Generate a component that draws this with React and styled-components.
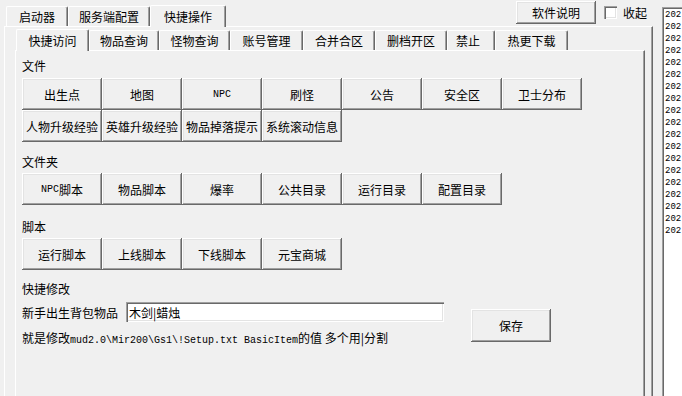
import React from 'react'
import styled, { createGlobalStyle } from 'styled-components'

const GlobalStyle = createGlobalStyle`
  html, body {
    margin: 0;
    padding: 0;
    background: #f0f0f0;
    overflow: hidden;
  }
  body {
    font-family: "Noto Sans CJK SC", "DejaVu Sans", sans-serif;
    font-size: 12px;
    color: #000;
  }
`

/* ---------------- layout ---------------- */
const Page = styled.div`
  display: flex;
  width: 682px;
  height: 396px;
  overflow: hidden;
`
const Main = styled.div`
  width: 649px;
  flex-shrink: 0;
  padding-left: 4px;
  display: flex;
  flex-direction: column;
`
const OuterHeader = styled.div`
  height: 26px;
  display: flex;
  align-items: flex-end;
  padding-left: 2px;
`
const HeaderTools = styled.div`
  margin-left: auto;
  align-self: flex-start;
  display: flex;
  align-items: center;
  padding-top: 1px;
  padding-right: 6px;
`
const OuterPanel = styled.div`
  flex: 1;
  display: flex;
  flex-direction: column;
  border-top: 1px solid #fff;
  border-left: 1px solid #fff;
  border-right: 1px solid #696969;
  box-shadow: inset -1px 0 0 #a0a0a0;
  padding: 0 7px 0 10px;
`
const InnerHeader = styled.div`
  height: 23px;
  display: flex;
  align-items: flex-end;
  padding-left: 1px;
`
const InnerPanel = styled.div`
  flex: 1;
  border-top: 1px solid #fff;
  border-left: 1px solid #fff;
  border-right: 1px solid #696969;
  box-shadow: inset -1px 0 0 #a0a0a0;
  padding: 7px 0 0 6px;
`

/* ---------------- tabs ---------------- */
const Tab = styled.div`
  box-sizing: border-box;
  width: ${p => p.$w}px;
  height: ${p => (p.$active ? 22 : 20)}px;
  display: flex;
  align-items: center;
  justify-content: ${p => (p.$left ? 'flex-start' : 'center')};
  padding-left: ${p => (p.$left ? 8 : 0)}px;
  padding-bottom: 1px;
  background: #f0f0f0;
  border-top: 1px solid #fff;
  border-left: 1px solid #fff;
  border-right: 1px solid #696969;
  box-shadow: inset -1px 0 0 #a0a0a0;
  border-radius: 2px 2px 0 0;
  margin-bottom: ${p => (p.$active ? -1 : 0)}px;
  position: relative;
  z-index: ${p => (p.$active ? 1 : 0)};
  white-space: nowrap;
`

/* ---------------- controls ---------------- */
const Button = styled.div`
  box-sizing: border-box;
  width: ${p => p.$w || 80}px;
  height: ${p => p.$h || 32}px;
  display: flex;
  align-items: center;
  justify-content: center;
  background: #f0f0f0;
  box-shadow: inset -1px -1px 0 #696969, inset 1px 1px 0 #fff,
    inset -2px -2px 0 #a0a0a0, inset 2px 2px 0 #e3e3e3;
  white-space: nowrap;
`
const Mono = styled.span`
  font-family: "Liberation Mono", "DejaVu Sans Mono", monospace;
  font-size: 10px;
`
const CheckBox = styled.div`
  box-sizing: border-box;
  width: 13px;
  height: 13px;
  margin: 0 6px 0 8px;
  background: #fff;
  box-shadow: inset 1px 1px 0 #a0a0a0, inset 2px 2px 0 #696969,
    inset -1px -1px 0 #fff, inset -2px -2px 0 #e3e3e3;
`
const Section = styled.div`
  margin-bottom: ${p => p.$mb || 12}px;
`
const Label = styled.div`
  line-height: 16px;
  margin-bottom: ${p => p.$mb || 3}px;
`
const ButtonGrid = styled.div`
  display: grid;
  grid-template-columns: repeat(7, 80px);
`
const EditArea = styled.div`
  display: flex;
  align-items: flex-start;
  margin-top: 5px;
`
const EditColumn = styled.div`
  display: flex;
  flex-direction: column;
`
const InputRow = styled.div`
  display: flex;
  align-items: center;
  gap: 8px;
`
const Input = styled.div`
  box-sizing: border-box;
  width: 318px;
  height: 20px;
  display: flex;
  align-items: center;
  padding-left: 3px;
  background: #fff;
  box-shadow: inset 1px 1px 0 #a0a0a0, inset 2px 2px 0 #696969,
    inset -1px -1px 0 #fff, inset -2px -2px 0 #e3e3e3;
`
const Hint = styled.div`
  margin-top: 8px;
  line-height: 16px;
  white-space: nowrap;
`
const SaveWrap = styled.div`
  margin: 7px 0 0 27px;
`

/* ---------------- log list ---------------- */
const Splitter = styled.div`
  width: 9px;
  flex-shrink: 0;
`
const ListBox = styled.div`
  box-sizing: border-box;
  width: 20px;
  flex-shrink: 0;
  margin-top: 7px;
  height: 400px;
  background: #fff;
  border-top: 1px solid #a0a0a0;
  border-left: 1px solid #a0a0a0;
  box-shadow: inset 1px 1px 0 #696969;
  padding: 1px 0 0 2px;
  overflow: hidden;
`
const LogLine = styled.div`
  font-family: "Liberation Mono", "DejaVu Sans Mono", monospace;
  font-size: 9px;
  line-height: 12px;
  white-space: nowrap;
`

const fileButtons = [
  '出生点', '地图', <Mono>NPC</Mono>, '刷怪', '公告', '安全区', '卫士分布',
  '人物升级经验', '英雄升级经验', '物品掉落提示', '系统滚动信息',
]
const folderButtons = [
  <><Mono>NPC</Mono>脚本</>, '物品脚本', '爆率', '公共目录', '运行目录', '配置目录',
]
const scriptButtons = ['运行脚本', '上线脚本', '下线脚本', '元宝商城']

const innerTabs = [
  { t: '快捷访问', w: 73, active: true },
  { t: '物品查询', w: 70 },
  { t: '怪物查询', w: 71 },
  { t: '账号管理', w: 73 },
  { t: '合并合区', w: 72 },
  { t: '删档开区', w: 72 },
  { t: '禁止', w: 48, left: true },
  { t: '热更下载', w: 73 },
]

const logs = Array.from({ length: 19 }, () => '202')

const App = () => {
  return (
    <Page>
      <GlobalStyle />
      <Main>
        <OuterHeader>
          <Tab $w={62}>启动器</Tab>
          <Tab $w={82}>服务端配置</Tab>
          <Tab $w={76} $active>快捷操作</Tab>
          <HeaderTools>
            <Button $w={80} $h={23}>软件说明</Button>
            <CheckBox />
            <span>收起</span>
          </HeaderTools>
        </OuterHeader>
        <OuterPanel>
          <InnerHeader>
            {innerTabs.map((x, i) => (
              <Tab key={i} $w={x.w} $active={x.active} $left={x.left}>{x.t}</Tab>
            ))}
          </InnerHeader>
          <InnerPanel>
            <Section>
              <Label $mb={4}>文件</Label>
              <ButtonGrid>
                {fileButtons.map((b, i) => <Button key={i}>{b}</Button>)}
              </ButtonGrid>
            </Section>
            <Section $mb={14}>
              <Label>文件夹</Label>
              <ButtonGrid>
                {folderButtons.map((b, i) => <Button key={i}>{b}</Button>)}
              </ButtonGrid>
            </Section>
            <Section $mb={11}>
              <Label>脚本</Label>
              <ButtonGrid>
                {scriptButtons.map((b, i) => <Button key={i}>{b}</Button>)}
              </ButtonGrid>
            </Section>
            <Label $mb={0}>快捷修改</Label>
            <EditArea>
              <EditColumn>
                <InputRow>
                  <span>新手出生背包物品</span>
                  <Input>木剑|蜡烛</Input>
                </InputRow>
                <Hint>
                  就是修改<Mono>mud2.0\Mir200\Gs1\!Setup.txt BasicItem</Mono>的值 多个用|分割
                </Hint>
              </EditColumn>
              <SaveWrap>
                <Button $w={80} $h={33}>保存</Button>
              </SaveWrap>
            </EditArea>
          </InnerPanel>
        </OuterPanel>
      </Main>
      <Splitter />
      <ListBox>
        {logs.map((l, i) => <LogLine key={i}>{l}</LogLine>)}
      </ListBox>
    </Page>
  )
}

export default App
